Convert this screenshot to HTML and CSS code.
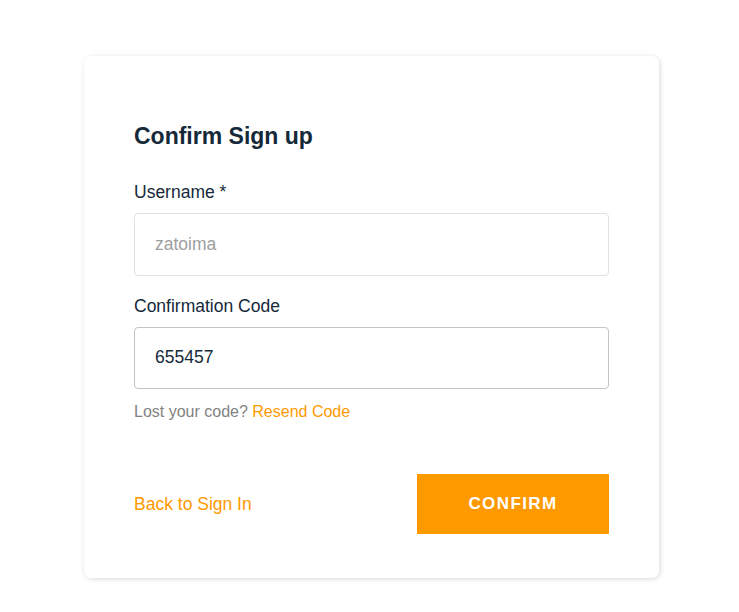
FILE: index.html
```html
<!DOCTYPE html>
<html lang="en">
<head>
<meta charset="utf-8">
<title>Confirm Sign up</title>
<link rel="stylesheet" href="styles.css">
</head>
<body>
<div class="page">
  <div class="card">
    <h1 class="title">Confirm Sign up</h1>
    <div class="field">
      <label class="label">Username *</label>
      <input class="input input-disabled" type="text" value="zatoima" disabled>
    </div>
    <div class="field">
      <label class="label">Confirmation Code</label>
      <input class="input" type="text" value="655457">
      <div class="hint">Lost your code? <a class="link" href="#">Resend Code</a></div>
    </div>
    <div class="footer">
      <a class="link back" href="#">Back to Sign In</a>
      <button class="btn" type="button">Confirm</button>
    </div>
  </div>
</div>
</body>
</html>
```
FILE: styles.css
```css
* { box-sizing: border-box; }
html, body { margin: 0; padding: 0; background: #fff; }
body {
  font-family: "Liberation Sans", Arial, sans-serif;
  color: #152939;
}
.page {
  display: flex;
  justify-content: center;
  padding: 56px 0 20px 4px;
}
.card {
  width: 575px;
  padding: 44px 50px 44px;
  background: #fff;
  border-radius: 7px;
  box-shadow: 1px 1px 5px 0 rgba(0, 0, 0, 0.15);
}
.title {
  margin: 23px 0 0;
  font-size: 23px;
  line-height: 26px;
  font-weight: 700;
  color: #152939;
}
.field {
  display: flex;
  flex-direction: column;
}
.field:first-of-type { margin-top: 31px; }
.field + .field { margin-top: 18px; }
.label {
  font-size: 17.5px;
  line-height: 22px;
  padding-top: 1px;
  color: #152939;
  margin-bottom: 10px;
}
.input {
  height: 62.5px;
  width: 100%;
  padding: 0 20px;
  border: 1px solid #c4c4c4;
  border-radius: 4px;
  font-family: inherit;
  font-size: 17.5px;
  color: #152939;
  background: #fff;
  outline: none;
}
.input-disabled {
  border-color: #e1e1e1;
  color: #9e9e9e;
  -webkit-text-fill-color: #9e9e9e;
  opacity: 1;
}
.hint {
  margin-top: 12.5px;
  font-size: 16px;
  line-height: 20px;
  color: #828282;
}
.link {
  color: #ff9900;
  text-decoration: none;
}
.footer {
  margin-top: 52px;
  display: flex;
  align-items: center;
  justify-content: space-between;
}
.back {
  font-size: 17.5px;
  line-height: 22px;
}
.btn {
  width: 192px;
  height: 60px;
  border: none;
  border-radius: 0;
  background: #ff9900;
  color: #fff;
  font-family: inherit;
  font-size: 17px;
  font-weight: 700;
  letter-spacing: 1.4px;
  text-transform: uppercase;
  cursor: pointer;
}
```
